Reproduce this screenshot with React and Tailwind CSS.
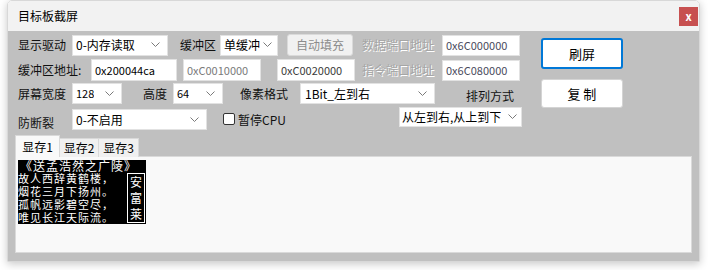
import React from 'react';

const Chevron = () => (
    <svg width="9" height="6" viewBox="0 0 9 6" className="shrink-0">
        <polyline points="0.5,0.5 4.5,4.5 8.5,0.5" fill="none" stroke="#7a7a7a" strokeWidth="1" />
    </svg>
);

function Select({ value, className = '' }) {
    return (
        <div className={`flex items-center justify-between bg-white border border-[#e2e2e2] pl-[3px] pr-[7px] text-black ${className}`}>
            <span className="whitespace-nowrap overflow-hidden">{value}</span>
            <Chevron />
        </div>
    );
}

function Input({ value, color = 'text-black', className = '' }) {
    return (
        <div className={`flex items-center bg-white border border-[#e2e2e2] pl-[3px] text-[11px] ${color} ${className}`}>
            {value}
        </div>
    );
}

function Disabled({ children, className = '' }) {
    return (
        <div className={`text-[12px] text-[#a6a6a6] [text-shadow:1px_1px_0_#ffffff] whitespace-nowrap ${className}`}>
            {children}
        </div>
    );
}

function Bitmap() {
    return (
        <div className="w-[128px] h-[64px] bg-black text-white flex flex-col leading-none">
            <div className="h-[12px] text-[12px] leading-[12px] tracking-[1px] pl-[2px] whitespace-nowrap">《送孟浩然之广陵》</div>
            <div className="flex flex-1">
                <div className="flex flex-col text-[11px] leading-[13px] tracking-[1px] whitespace-nowrap">
                    <span>故人西辞黄鹤楼，</span>
                    <span>烟花三月下扬州。</span>
                    <span>孤帆远影碧空尽，</span>
                    <span>唯见长江天际流。</span>
                </div>
                <div className="ml-auto mr-[1px] mt-[1px] w-[18px] h-[50px] border border-white flex flex-col items-center justify-around text-[12px] leading-[14px]">
                    <span>安</span>
                    <span>富</span>
                    <span>莱</span>
                </div>
            </div>
        </div>
    );
}

export default function App() {
    return (
        <div className="w-[708px] h-[270px] bg-white font-['Noto_Sans_CJK_SC','Noto_Sans',sans-serif] text-[#111]">
            <div className="ml-[7px] w-[693px] h-[262px] rounded-t-[5px] overflow-hidden shadow-[0_2px_8px_rgba(0,0,0,0.22)] border border-[#d8d8d8] flex flex-col">
                {/* title bar */}
                <div className="h-[30px] bg-[#f2f2f2] flex items-center justify-between pl-[10px] pr-[1px] shrink-0">
                    <span className="text-[12px] text-black">目标板截屏</span>
                    <div className="w-[19px] h-[19px] bg-[#c75050] text-white text-[11px] font-bold flex items-center justify-center leading-none">x</div>
                </div>

                {/* body */}
                <div className="flex-1 bg-[#c0c0c0] px-[7px] flex flex-col">
                    <div className="flex">
                        <div className="flex flex-col pl-[3px] pt-[3px]">
                            {/* row 1 */}
                            <div className="flex items-center h-[22px]">
                                <span className="w-[54px] text-[12px]">显示驱动</span>
                                <Select value="0-内存读取" className="w-[96px] h-[21px] text-[12px]" />
                                <span className="ml-[12px] w-[40px] text-[12px]">缓冲区</span>
                                <Select value="单缓冲" className="w-[58px] h-[21px] text-[12px] !pr-[5px]" />
                                <div className="ml-[9px] w-[66px] h-[22px] bg-[#f1f1f1] border border-[#dadada] rounded-[3px] flex items-center justify-center text-[12px] text-[#8c8c8c]">自动填充</div>
                                <Disabled className="ml-[9px] w-[80px]">数据端口地址</Disabled>
                                <Input value="0x6C000000" color="text-[#4a4a5c]" className="w-[78px] h-[21px]" />
                            </div>
                            {/* row 2 */}
                            <div className="flex items-center h-[22px] mt-[3px]">
                                <span className="w-[73px] text-[12px]">缓冲区地址:</span>
                                <Input value="0x200044ca" className="w-[86px] h-[22px]" />
                                <Input value="0xC0010000" color="text-[#7a7a7a]" className="ml-[6px] w-[78px] h-[22px]" />
                                <Input value="0xC0020000" color="text-[#3a3a3a]" className="ml-[16px] w-[78px] h-[22px]" />
                                <Disabled className="ml-[7px] w-[80px]">指令端口地址</Disabled>
                                <Input value="0x6C080000" color="text-[#4a4a5c]" className="w-[78px] h-[21px]" />
                            </div>
                            {/* row 3 */}
                            <div className="flex items-center h-[21px] mt-[2px]">
                                <span className="w-[54px] text-[12px]">屏幕宽度</span>
                                <Select value="128" className="w-[50px] h-[21px] text-[11px]" />
                                <span className="ml-[21px] w-[30px] text-[12px]">高度</span>
                                <Select value="64" className="w-[50px] h-[21px] text-[11px]" />
                                <span className="ml-[17px] w-[60px] text-[12px]">像素格式</span>
                                <Select value="1Bit_左到右" className="w-[135px] h-[21px] text-[12px] !pl-[4px]" />
                                <span className="ml-[31px] text-[12px] mt-[4px]">排列方式</span>
                            </div>
                            {/* row 4 */}
                            <div className="flex items-start h-[23px] mt-[3px]">
                                <span className="w-[54px] text-[12px] mt-[7px]">防断裂</span>
                                <Select value="0-不启用" className="w-[135px] h-[21px] text-[12px] mt-[2px]" />
                                <div className="ml-[16px] mt-[6px] w-[12px] h-[12px] bg-white border border-[#333] rounded-[2px]" />
                                <span className="ml-[3px] mt-[4px] text-[12px]">暂停CPU</span>
                                <Select value="从左到右,从上到下" className="ml-[113px] w-[123px] h-[20px] text-[12px] !pl-[2px] !pr-[4px]" />
                            </div>
                        </div>
                        {/* right buttons */}
                        <div className="ml-[19px] pt-[7px] flex flex-col">
                            <div className="w-[82px] h-[31px] bg-white border-2 border-[#0078d7] rounded-[3px] flex items-center justify-center text-[13px] text-black">刷屏</div>
                            <div className="mt-[10px] w-[82px] h-[29px] bg-white border border-[#d4d4d4] rounded-[3px] flex items-center justify-center text-[13px] text-black">复 制</div>
                        </div>
                    </div>

                    {/* tabs */}
                    <div className="flex items-end mt-[5px] relative z-10">
                        <div className="w-[45px] h-[22px] bg-[#f9f9f9] border border-[#d9d9d9] border-b-0 flex items-center justify-center text-[12px] text-black">显存1</div>
                        <div className="w-[39px] h-[19px] bg-[#f0f0f0] border border-[#d9d9d9] border-l-0 border-b-0 flex items-center justify-center text-[12px] text-black">显存2</div>
                        <div className="w-[40px] h-[19px] bg-[#f0f0f0] border border-[#d9d9d9] border-l-0 border-b-0 flex items-center justify-center text-[12px] text-black">显存3</div>
                    </div>
                    <div className="w-[677px] h-[97px] bg-[#f9f9f9] border border-[#dadada] -mt-[1px] pl-[2px] pt-[3px]">
                        <Bitmap />
                    </div>
                </div>
            </div>
        </div>
    );
}
